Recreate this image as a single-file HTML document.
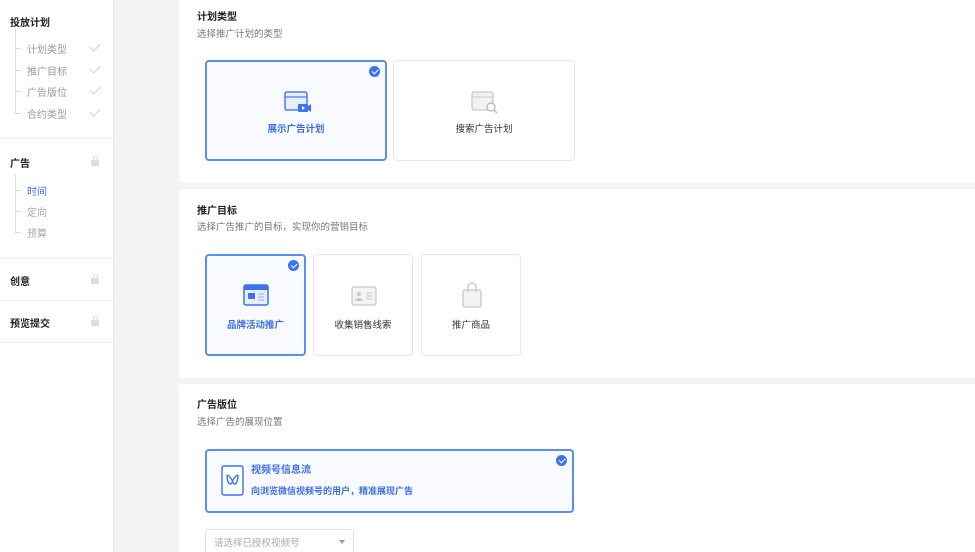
<!DOCTYPE html>
<html style="width:975px;height:552px;overflow:hidden"><head><meta charset="utf-8"><style>
*{margin:0;padding:0;box-sizing:border-box}
body{width:975px;height:552px;overflow:hidden;background:#f4f4f5;font-family:"Liberation Sans","Noto Sans CJK SC",sans-serif;position:relative}
.abs{position:absolute}
#side{left:0;top:0;width:114px;height:552px;background:#fff;border-right:1px solid #e8e8e8}
.h{font-size:10px;font-weight:bold;color:#222;left:10px}
.it{font-size:10px;color:#9a9a9a;left:27px}
.sep{left:0;width:113px;height:1px;background:#ececec}
.ck{left:90px;width:10px;height:6px;border-left:1.2px solid #d0d0d0;border-bottom:1.2px solid #d0d0d0;transform:rotate(-45deg)}
.lk{left:91px;width:8px;height:6px;background:#ddd;border-radius:1px}
.lk:before{content:"";position:absolute;left:1.5px;top:-4px;width:5px;height:5px;border:1.2px solid #ddd;border-bottom:none;border-radius:3px 3px 0 0;box-sizing:border-box}
.vl{width:1px;background:#ddd;left:15px}
.hl{height:1px;width:6px;background:#ddd;left:15px}
.card{left:179px;width:820px;background:#fff;border-radius:4px}
.t{font-size:10px;font-weight:bold;color:#222;left:197px}
.s{font-size:9.5px;color:#777;left:197px}
.opt{border:1px solid #e8e8e8;border-radius:4px;background:#fff;text-align:center;font-size:9.5px;color:#333}
.sel{border:2px solid #5b8ef5;background:#f8faff;color:#3b6fe8;font-weight:bold}
.badge{position:absolute;right:5px;top:4px;width:11px;height:11px;border-radius:50%;background:#3b73ee}
.badge:after{content:"";position:absolute;left:3px;top:2.6px;width:5px;height:2.6px;border-left:1.3px solid #fff;border-bottom:1.3px solid #fff;transform:rotate(-45deg)}
</style></head><body>
<div id="side" class="abs">
<div class="abs h" style="top:14px">投放计划</div>
<div class="abs vl" style="top:30px;height:83px"></div>
<div class="abs hl" style="top:48px"></div><div class="abs it" style="top:41px">计划类型</div><div class="abs ck" style="top:43px"></div>
<div class="abs hl" style="top:70px"></div><div class="abs it" style="top:63px">推广目标</div><div class="abs ck" style="top:65px"></div>
<div class="abs hl" style="top:91px"></div><div class="abs it" style="top:84px">广告版位</div><div class="abs ck" style="top:86px"></div>
<div class="abs hl" style="top:113px"></div><div class="abs it" style="top:106px">合约类型</div><div class="abs ck" style="top:108px"></div>
<div class="abs sep" style="top:138px"></div>
<div class="abs h" style="top:155px">广告</div><div class="abs lk" style="top:160px"></div>
<div class="abs vl" style="top:174px;height:59px"></div>
<div class="abs hl" style="top:190px"></div><div class="abs it" style="top:183px;color:#3b6fe8">时间</div>
<div class="abs hl" style="top:211px"></div><div class="abs it" style="top:204px;color:#aaa">定向</div>
<div class="abs hl" style="top:232px"></div><div class="abs it" style="top:225px;color:#aaa">预算</div>
<div class="abs sep" style="top:258px"></div>
<div class="abs h" style="top:273px">创意</div><div class="abs lk" style="top:278px"></div>
<div class="abs sep" style="top:300px"></div>
<div class="abs h" style="top:315px">预览提交</div><div class="abs lk" style="top:320px"></div>
<div class="abs sep" style="top:342px"></div>
</div>

<div class="abs card" style="top:-5px;height:188px"></div>
<div class="abs t" style="top:8px">计划类型</div>
<div class="abs s" style="top:26px">选择推广计划的类型</div>
<div class="abs opt sel" style="left:205px;top:60px;width:182px;height:101px"><div class="badge"></div>
<svg style="position:absolute;left:76px;top:28px" width="30" height="24" viewBox="0 0 30 24"><rect x="2" y="2" width="22" height="18" rx="2" fill="#e6eeff" stroke="#4a7cf6" stroke-width="1.5"/><line x1="2" y1="7" x2="24" y2="7" stroke="#4a7cf6" stroke-width="1.2"/><rect x="15" y="14" width="10" height="8" rx="1" fill="#3b73ee"/><path d="M25 16l3-2v8l-3-2z" fill="#3b73ee"/><path d="M19 16v4l3-2z" fill="#fff"/></svg>
<div style="position:absolute;left:0;right:0;top:59px">展示广告计划</div></div>
<div class="abs opt" style="left:393px;top:60px;width:182px;height:101px">
<svg style="position:absolute;left:76px;top:29px" width="30" height="24" viewBox="0 0 30 24"><rect x="2" y="2" width="21" height="18" rx="2" fill="#f2f2f2" stroke="#c8c8c8" stroke-width="1.3"/><line x1="2" y1="7" x2="23" y2="7" stroke="#c8c8c8"/><circle cx="21" cy="17" r="4" fill="#fff" stroke="#b8b8b8" stroke-width="1.3"/><line x1="24" y1="20" x2="27" y2="23" stroke="#b8b8b8" stroke-width="1.3"/></svg>
<div style="position:absolute;left:0;right:0;top:60px">搜索广告计划</div></div>

<div class="abs card" style="top:189px;height:189px"></div>
<div class="abs t" style="top:202px">推广目标</div>
<div class="abs s" style="top:219px">选择广告推广的目标，实现你的营销目标</div>
<div class="abs opt sel" style="left:205px;top:254px;width:101px;height:102px"><div class="badge"></div>
<svg style="position:absolute;left:35px;top:27px" width="28" height="24" viewBox="0 0 28 24"><rect x="2" y="2" width="24" height="20" rx="2" fill="#e6eeff" stroke="#3b73ee" stroke-width="1.5"/><rect x="2" y="2" width="24" height="5" fill="#3b73ee"/><rect x="6" y="10" width="7" height="6" fill="#3b73ee"/><path d="M16 11h6M16 14h6M16 17h6" stroke="#8fb0f5"/></svg>
<div style="position:absolute;left:0;right:0;top:61px">品牌活动推广</div></div>
<div class="abs opt" style="left:313px;top:254px;width:100px;height:102px">
<svg style="position:absolute;left:36px;top:28px" width="28" height="24" viewBox="0 0 28 24"><rect x="2" y="4" width="24" height="18" rx="2" fill="#f3f3f3" stroke="#c8c8c8" stroke-width="1.3"/><circle cx="9" cy="11" r="2" fill="#c8c8c8"/><path d="M5 18a4 3 0 0 1 8 0z" fill="#c8c8c8"/><path d="M16 10h6M16 13h6M16 16h6" stroke="#c8c8c8"/></svg>
<div style="position:absolute;left:0;right:0;top:62px">收集销售线索</div></div>
<div class="abs opt" style="left:421px;top:254px;width:100px;height:102px">
<svg style="position:absolute;left:36px;top:26px" width="28" height="28" viewBox="0 0 28 28"><rect x="5" y="9" width="18" height="17" rx="2" fill="#f3f3f3" stroke="#c8c8c8" stroke-width="1.3"/><path d="M10 11V6a4 4 0 0 1 8 0v5" fill="none" stroke="#c8c8c8" stroke-width="1.3"/></svg>
<div style="position:absolute;left:0;right:0;top:62px">推广商品</div></div>

<div class="abs card" style="top:384px;height:180px"></div>
<div class="abs t" style="top:396px">广告版位</div>
<div class="abs s" style="top:414px">选择广告的展现位置</div>
<div class="abs opt sel" style="left:205px;top:449px;width:369px;height:64px;text-align:left"><div class="badge"></div>
<svg style="position:absolute;left:14px;top:14px" width="23" height="31" viewBox="0 0 23 31"><rect x="1" y="1" width="21" height="29" rx="2" fill="#fff" stroke="#3b73ee" stroke-width="1.4"/><path d="M6 11c0-2 3 0 5.5 5 2.5-5 5.5-7 5.5-5s-1 8-3 8-2.5-3-2.5-3-0.5 3-2.5 3-3-6-3-8z" fill="none" stroke="#3b73ee" stroke-width="1.4"/></svg>
<div style="position:absolute;left:44px;top:10px;font-size:10px;font-weight:bold">视频号信息流</div>
<div style="position:absolute;left:44px;top:33px;font-size:9px">向浏览微信视频号的用户，精准展现广告</div></div>
<div class="abs" style="left:205px;top:529px;width:149px;height:26px;border:1px solid #e2e2e2;border-radius:3px;background:#fff;font-size:9.5px;color:#aaa;padding:5px 0 0 8px;font-weight:normal">请选择已授权视频号<span style="position:absolute;right:8px;top:10px;border:3.5px solid transparent;border-top:4px solid #999"></span></div>
</body></html>
